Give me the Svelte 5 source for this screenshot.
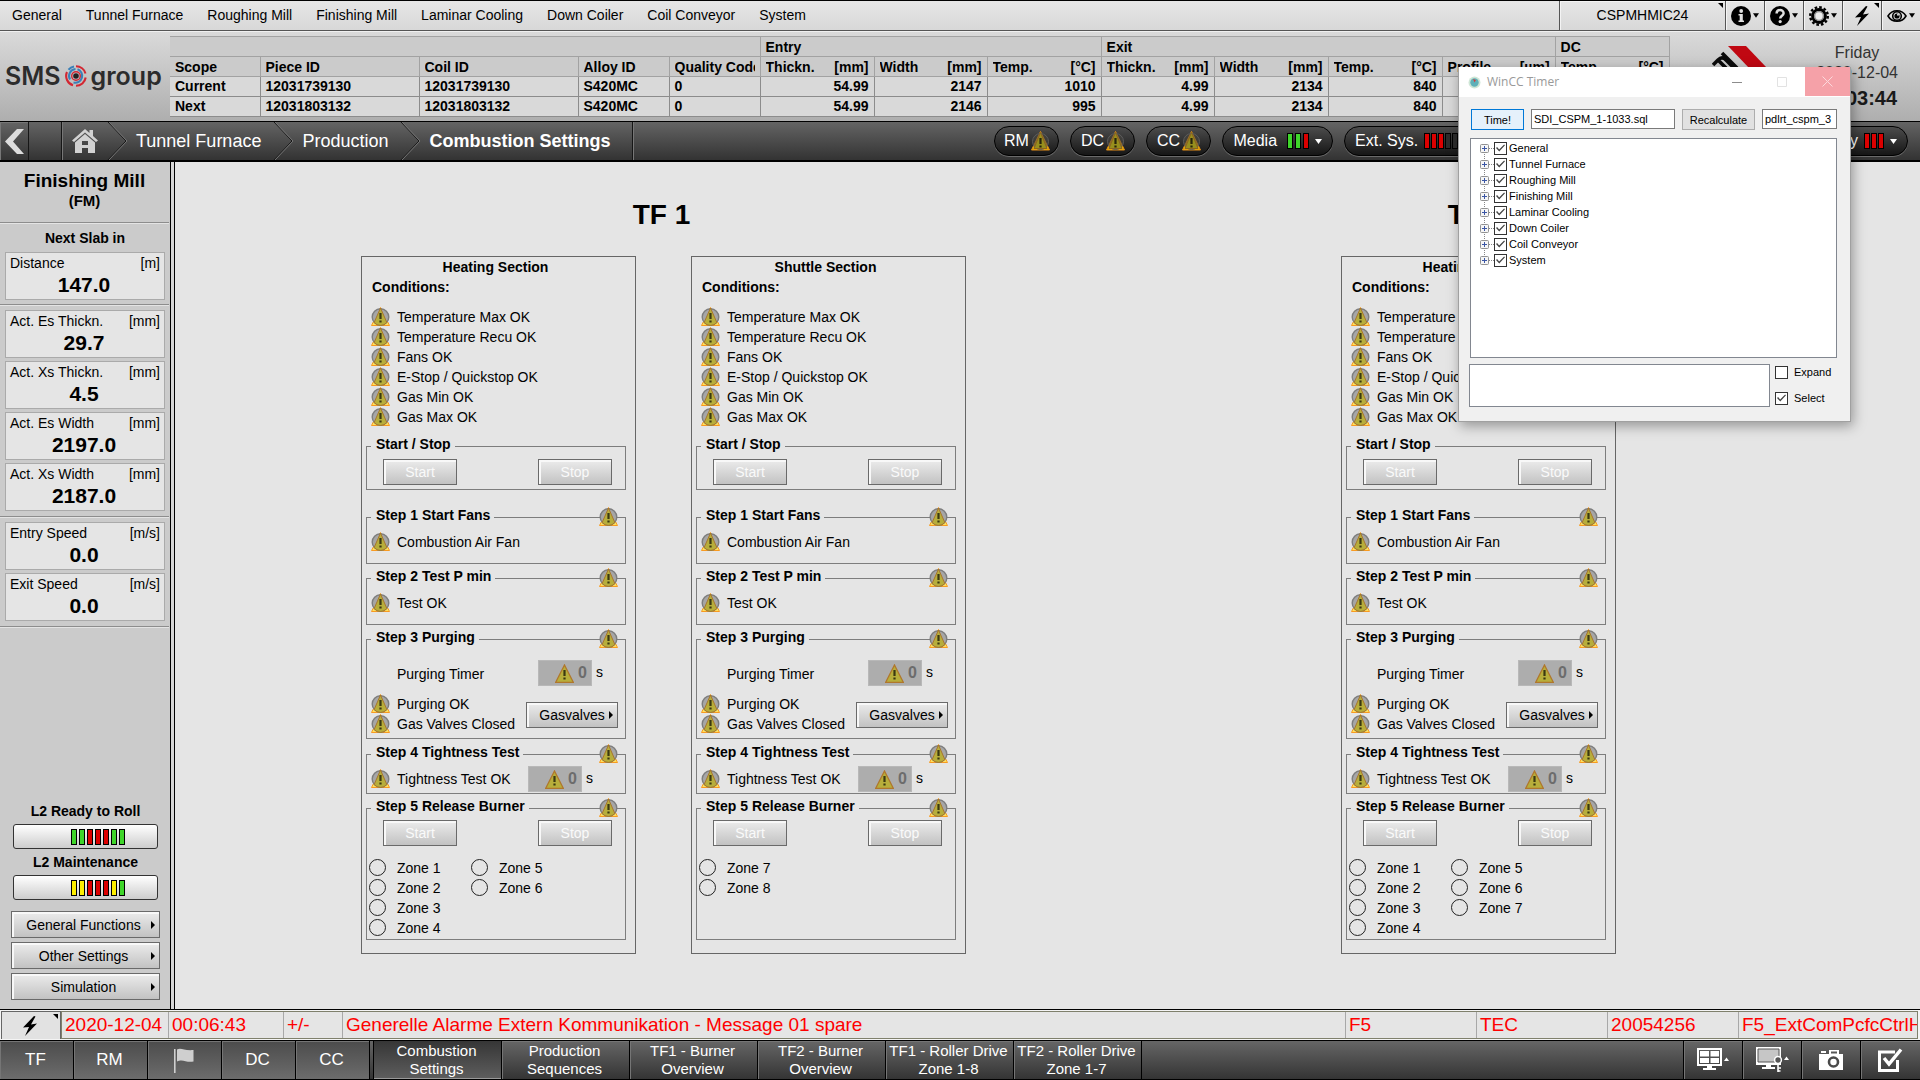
<script>
  const menu = ['General', 'Tunnel Furnace', 'Roughing Mill', 'Finishing Mill', 'Laminar Cooling', 'Down Coiler', 'Coil Conveyor', 'System'];

  const columns = [
    { label: 'Scope', width: 90 },
    { label: 'Piece ID', width: 159 },
    { label: 'Coil ID', width: 159 },
    { label: 'Alloy ID', width: 91 },
    { label: 'Quality Code', width: 91 },
    { label: 'Thickn.', unit: '[mm]', width: 114 },
    { label: 'Width', unit: '[mm]', width: 113 },
    { label: 'Temp.', unit: '[°C]', width: 114 },
    { label: 'Thickn.', unit: '[mm]', width: 113 },
    { label: 'Width', unit: '[mm]', width: 114 },
    { label: 'Temp.', unit: '[°C]', width: 114 },
    { label: 'Profile', unit: '[µm]', width: 113 },
    { label: 'Temp.', unit: '[°C]', width: 114 }
  ];
  const pieces = [
    ['Current', '12031739130', '12031739130', 'S420MC', '0', '54.99', '2147', '1010', '4.99', '2134', '840', '', ''],
    ['Next', '12031803132', '12031803132', 'S420MC', '0', '54.99', '2146', '995', '4.99', '2134', '840', '', '']
  ];

  const readings = [
    [{ label: 'Distance', unit: '[m]', value: '147.0' }],
    [
      { label: 'Act. Es Thickn.', unit: '[mm]', value: '29.7' },
      { label: 'Act. Xs Thickn.', unit: '[mm]', value: '4.5' },
      { label: 'Act. Es Width', unit: '[mm]', value: '2197.0' },
      { label: 'Act. Xs Width', unit: '[mm]', value: '2187.0' }
    ],
    [
      { label: 'Entry Speed', unit: '[m/s]', value: '0.0' },
      { label: 'Exit Speed', unit: '[m/s]', value: '0.0' }
    ]
  ];

  const level2 = [
    { label: 'L2 Ready to Roll', bars: ['green', 'green', 'red', 'red', 'red', 'green', 'green'] },
    { label: 'L2 Maintenance', bars: ['yellow', 'yellow', 'red', 'red', 'red', 'yellow', 'green'] }
  ];

  const conditions = ['Temperature Max OK', 'Temperature Recu OK', 'Fans OK', 'E-Stop / Quickstop OK', 'Gas Min OK', 'Gas Max OK'];

  const furnaces = [
    {
      name: 'TF 1',
      sections: [
        { name: 'Heating Section', zones: [[1, 2, 3, 4], [5, 6]] },
        { name: 'Shuttle Section', zones: [[7, 8]] }
      ]
    },
    { name: 'TF 2', sections: [{ name: 'Heating Section', zones: [[1, 2, 3, 4], [5, 6, 7]] }] }
  ];

  const pages = [
    ['Combustion', 'Settings'],
    ['Production', 'Sequences'],
    ['TF1 - Burner', 'Overview'],
    ['TF2 - Burner', 'Overview'],
    ['TF1 - Roller Drive', 'Zone 1-8'],
    ['TF2 - Roller Drive', 'Zone 1-7']
  ];

  let checked = $state(menu.map(() => true));
  let script = $state('SDI_CSPM_1-1033.sql');
  let target = $state('pdlrt_cspm_3');
  let log = $state('');
  let expand = $state(false);
  let select = $state(true);
</script>

{#snippet status()}
  <svg class="status" width="19" height="19" viewBox="0 0 19 19" aria-hidden="true">
    <path d="M9.5 0.5 L18.5 18.5 H0.5 Z" fill="#ffe25a" stroke="#f79a22" />
    <circle cx="9.5" cy="10" r="8.3" fill="#a6a6a6" stroke="#7d7d7d" stroke-width="1.4" />
    <path d="M9.5 1 L15.8 15.4 A8 8 0 0 1 3.2 15.4 Z" fill="#b7ae3b" stroke="#a9762c" />
    <path d="M9.5 6 V12 M9.5 13.5 V15.5" stroke="#3a3812" stroke-width="2.2" />
  </svg>
{/snippet}

{#snippet triangle()}
  <svg width="19" height="19" viewBox="0 0 19 19" aria-hidden="true">
    <path d="M9.5 1 L18.3 18.3 H0.7 Z" fill="#b7ae3b" stroke="#b0772c" stroke-width="1.3" />
    <path d="M9.5 6 V12 M9.5 13.5 V15.5" stroke="#3a3812" stroke-width="2.2" />
  </svg>
{/snippet}

{#snippet darkStatus()}
  <svg width="19" height="20" viewBox="0 0 19 20" aria-hidden="true">
    <path d="M9.5 0.5 L18.5 19 H0.5 Z" fill="#e5b800" stroke="#e08a18" />
    <circle cx="9.5" cy="10.5" r="8" fill="#474540" fill-opacity="0.5" stroke="#5d5d5d" />
    <path d="M9.5 1.5 L16 17.5 H3 Z" fill="#978f1d" stroke="#8a6420" />
    <path d="M9.5 7 V13 M9.5 14.5 V16.5" stroke="#26240c" stroke-width="2.2" />
  </svg>
{/snippet}

{#snippet bars(list)}
  <span class="bars">
    {#each list as color}<i class="bar {color}"></i>{/each}
  </span>
{/snippet}

{#snippet down()}
  <svg class="down" width="7" height="5" viewBox="0 0 7 5" aria-hidden="true"><path d="M0 0 H7 L3.5 5 Z" fill="currentColor" /></svg>
{/snippet}

{#snippet right()}
  <svg class="right" width="4" height="8" viewBox="0 0 4 8" aria-hidden="true"><path d="M0 0 L4 4 L0 8 Z" fill="currentColor" /></svg>
{/snippet}

{#snippet corner()}
  <svg class="corner" width="5" height="5" viewBox="0 0 5 5" aria-hidden="true"><path d="M0 0 H5 V5 Z" fill="#000" /></svg>
{/snippet}

{#snippet bolt()}
  <svg width="16" height="20" viewBox="0 0 16 20" aria-hidden="true"><path d="M12 0 L1 11.5 L7 11 L3 20 L15 7.5 L9 8.5 L13.5 0.5 Z" fill="#000" /></svg>
{/snippet}

{#snippet chevron()}
  <svg class="chevron" width="20" height="38" viewBox="0 0 20 38" aria-hidden="true">
    <path d="M1 0 L19 19 L1 38" fill="none" stroke="#161616" />
    <path d="M2 0 L20 19 L2 38" fill="none" stroke="#767676" />
  </svg>
{/snippet}

<div class="page">
  <nav class="menu" aria-label="Areas">
    {#each menu as item}<button class="menu-item">{item}</button>{/each}
    <div class="tools">
      <button class="tool host">CSPMHMIC24{@render corner()}</button>
      <button class="tool" aria-label="Information">
        <svg width="20" height="20" viewBox="0 0 20 20" aria-hidden="true"><circle cx="10" cy="10" r="10" fill="#000" /><circle cx="10.2" cy="5" r="1.9" fill="#e0e0e0" /><path d="M7.5 8 H11.8 V14.5 H13 V16 H7.5 V14.5 H8.7 V9.5 H7.5 Z" fill="#e0e0e0" /></svg>
        {@render down()}
      </button>
      <button class="tool" aria-label="Help">
        <svg width="20" height="20" viewBox="0 0 20 20" aria-hidden="true"><circle cx="10" cy="10" r="10" fill="#000" /><path d="M6.6 7.6 C6.6 3 13.6 3 13.6 7.3 C13.6 9.8 10.2 9.8 10.2 12.6" fill="none" stroke="#e0e0e0" stroke-width="2.5" /><circle cx="10.2" cy="15.6" r="1.6" fill="#e0e0e0" /></svg>
        {@render down()}
      </button>
      <button class="tool" aria-label="Settings">
        <svg width="20" height="20" viewBox="0 0 20 20" aria-hidden="true"><circle cx="10" cy="10" r="8.8" fill="none" stroke="#000" stroke-width="2.4" stroke-dasharray="2.6 2" /><circle cx="10" cy="10" r="6.4" fill="#ededed" stroke="#000" stroke-width="3" /><circle cx="10" cy="10" r="4.4" fill="#ededed" stroke="#8d8d8d" stroke-width="1.4" /></svg>
        {@render down()}
      </button>
      <button class="tool" aria-label="Actions">{@render bolt()}{@render corner()}</button>
      <button class="tool" aria-label="View">
        <svg width="20" height="14" viewBox="0 0 20 14" aria-hidden="true"><path d="M1 7 C5 0 15 0 19 7 C15 14 5 14 1 7 Z" fill="none" stroke="#000" stroke-width="1.6" /><circle cx="10" cy="7" r="4.3" fill="none" stroke="#000" stroke-width="1.6" /><circle cx="10" cy="7" r="2.6" fill="#000" /><circle cx="11" cy="5.8" r="1" fill="#e0e0e0" /></svg>
        {@render down()}
      </button>
    </div>
  </nav>

  <header class="header">
    <div class="logo">
      <span>SMS</span>
      <svg width="22" height="22" viewBox="0 0 22 22" aria-hidden="true">
        <g fill="none" stroke-width="2.1">
          <path d="M11 1.2 A9.8 9.8 0 0 1 20.5 8.5 M20.7 12.5 A9.8 9.8 0 0 1 11 20.8 M8 20.3 A9.8 9.8 0 0 1 2 7" stroke="#d32732" />
          <path d="M3.5 4.7 A9.8 9.8 0 0 1 9 1.5" stroke="#3b80b8" />
          <path d="M5 14.5 A7 7 0 0 1 10.5 4" stroke="#3b80b8" />
          <path d="M12.5 4.2 A7 7 0 0 1 8.5 17.6" stroke="#3b80b8" />
          <circle cx="11" cy="11" r="4.3" stroke="#d32732" stroke-width="1.4" />
        </g>
        <circle cx="11" cy="11" r="2.8" fill="#222" />
      </svg>
      <span>group</span>
    </div>

    <table class="pieces">
      <colgroup>
        {#each columns as column}<col style:width="{column.width}px" />{/each}
      </colgroup>
      <thead>
        <tr>
          <th colspan="5"></th>
          <th colspan="3" scope="colgroup">Entry</th>
          <th colspan="4" scope="colgroup">Exit</th>
          <th scope="colgroup">DC</th>
        </tr>
        <tr>
          {#each columns as column}
            <th scope="col"><div class="pair"><span>{column.label}</span>{#if column.unit}<span>{column.unit}</span>{/if}</div></th>
          {/each}
        </tr>
      </thead>
      <tbody>
        {#each pieces as row}
          <tr>
            {#each row as cell, i}<td class:number={i > 4}>{cell}</td>{/each}
          </tr>
        {/each}
      </tbody>
    </table>

    <div class="brand">
      <svg width="60" height="50" viewBox="0 0 60 50" aria-hidden="true">
        <path d="M16 0 H34 L80 48 H62 Z" fill="#c00812" />
        <path d="M10 7 L25 22 M1 19 L6 14 Q10 10 14 14 L22 22 M6 14 L14 22" fill="none" stroke="#0b0b0b" stroke-width="3.6" />
      </svg>
    </div>
    <div class="clock">
      <span>Friday</span>
      <span>2020-12-04</span>
      <strong>00:03:44</strong>
    </div>
  </header>

  <nav class="crumbs" aria-label="Breadcrumb">
    <button class="back" aria-label="Back">
      <svg width="19" height="25" viewBox="0 0 19 25" aria-hidden="true"><path d="M12 0 H19 L8 12.5 L19 25 H12 L0 12.5 Z" fill="#ddd" /></svg>
    </button>
    <span class="blank"></span>
    <button class="home" aria-label="Home">
      <svg width="26" height="24" viewBox="0 0 26 24" aria-hidden="true"><path d="M13 0 L0 11.5 L2 13 L13 3.5 L24 13 L26 11.5 L21 7 V1 H17.5 V4 Z" fill="#d2d2d2" /><path d="M13 5 L3 13.5 V24 H10 V19 H16 V24 H23 V13.5 Z M10 12 H16 V16 H10 Z" fill="#d2d2d2" fill-rule="evenodd" /></svg>
    </button>
    {@render chevron()}
    <a href="#furnace">Tunnel Furnace</a>
    {@render chevron()}
    <a href="#production">Production</a>
    {@render chevron()}
    <a class="current" href="#combustion" aria-current="page">Combustion Settings</a>
    <div class="pills">
      <button class="pill">RM{@render darkStatus()}</button>
      <button class="pill">DC{@render darkStatus()}</button>
      <button class="pill">CC{@render darkStatus()}</button>
      <button class="pill wide">Media {@render bars(['green', 'green', 'red'])}{@render down()}</button>
      <button class="pill wide dense">Ext. Sys. {@render bars(['red', 'red', 'red', 'off', 'off', 'off', 'off', 'off', 'off', 'off'])}{@render down()}</button>
      <button class="pill wide dense last">Safety {@render bars(['red', 'red', 'red'])}{@render down()}</button>
    </div>
  </nav>

  <div class="body">
    <aside class="side">
      <div class="area">
        <h2>Finishing Mill</h2>
        <p>(FM)</p>
      </div>
      {#each readings as group, i}
        <div class="group">
          {#if i === 0}<h3>Next Slab in</h3>{/if}
          {#each group as item}
            <div class="reading">
              <div class="pair"><span>{item.label}</span><span>{item.unit}</span></div>
              <output>{item.value}</output>
            </div>
          {/each}
        </div>
      {/each}
      <div class="level2">
        {#each level2 as item}
          <h3>{item.label}</h3>
          <button class="signal" aria-label={item.label}>{@render bars(item.bars)}</button>
        {/each}
      </div>
      <div class="functions">
        {#each ['General Functions', 'Other Settings', 'Simulation'] as item}
          <button class="raised"><span>{item}</span>{@render right()}</button>
        {/each}
      </div>
    </aside>

    <main class="main">
      {#each furnaces as furnace}
        <section class="furnace">
          <h1>{furnace.name}</h1>
          <div class="sections">
            {#each furnace.sections as section}
              <article class="panel">
                <h2>{section.name}</h2>
                <h3>Conditions:</h3>
                <ul class="conditions">
                  {#each conditions as condition}<li class="row">{@render status()}{condition}</li>{/each}
                </ul>

                <div class="step first">
                  <fieldset class="commands">
                    <legend>Start / Stop</legend>
                    <div class="actions"><button class="raised" disabled>Start</button><button class="raised" disabled>Stop</button></div>
                  </fieldset>
                </div>

                <div class="step second">
                  <fieldset class="single">
                    <legend>Step 1 Start Fans</legend>
                    <div class="row">{@render status()}Combustion Air Fan</div>
                  </fieldset>
                  <span class="badge">{@render status()}</span>
                </div>

                <div class="step">
                  <fieldset class="single">
                    <legend>Step 2 Test P min</legend>
                    <div class="row">{@render status()}Test OK</div>
                  </fieldset>
                  <span class="badge">{@render status()}</span>
                </div>

                <div class="step">
                  <fieldset class="purging">
                    <legend>Step 3 Purging</legend>
                    <div class="timer">
                      <span class="timer-label">Purging Timer</span>
                      <output class="field">{@render triangle()}0</output>
                      <span class="seconds">s</span>
                    </div>
                    <div class="valves">
                      <div>
                        <div class="row">{@render status()}Purging OK</div>
                        <div class="row">{@render status()}Gas Valves Closed</div>
                      </div>
                      <button class="raised"><span>Gasvalves</span>{@render right()}</button>
                    </div>
                  </fieldset>
                  <span class="badge">{@render status()}</span>
                </div>

                <div class="step fourth">
                  <fieldset class="tightness">
                    <legend>Step 4 Tightness Test</legend>
                    <div class="timer">
                      <div class="row timer-label">{@render status()}Tightness Test OK</div>
                      <output class="field">{@render triangle()}0</output>
                      <span class="seconds">s</span>
                    </div>
                  </fieldset>
                  <span class="badge">{@render status()}</span>
                </div>

                <div class="step">
                  <fieldset class="commands burner">
                    <legend>Step 5 Release Burner</legend>
                    <div class="actions"><button class="raised" disabled>Start</button><button class="raised" disabled>Stop</button></div>
                    <div class="zones">
                      {#each section.zones as zoneColumn}
                        <ul>
                          {#each zoneColumn as zone}<li><i class="lamp"></i>Zone {zone}</li>{/each}
                        </ul>
                      {/each}
                    </div>
                  </fieldset>
                  <span class="badge">{@render status()}</span>
                </div>
              </article>
            {/each}
          </div>
        </section>
      {/each}
    </main>
  </div>

  <div class="alarm">
    <button class="alarm-button" aria-label="Alarms">{@render bolt()}{@render corner()}</button>
    <div class="alarm-line">
      <span class="date">2020-12-04</span>
      <span class="time">00:06:43</span>
      <span class="state">+/-</span>
      <span class="message">Generelle Alarme Extern Kommunikation - Message 01 spare</span>
      <span class="code">F5</span>
      <span class="code">TEC</span>
      <span class="code">20054256</span>
      <span class="source">F5_ExtComPcfcCtrlHmi</span>
    </div>
  </div>

  <footer class="footer">
    <button class="unit">TF</button>
    <button class="unit">RM</button>
    <button class="unit" aria-label="Flag">
      <svg width="20" height="25" viewBox="0 0 20 25" aria-hidden="true"><path d="M0.8 1 V25" stroke="#cfcfcf" stroke-width="1.6" /><path d="M3 1.5 C7 -1 10 3 19.5 2 V13.5 C12 15 9 10.5 3 13.5 Z" fill="#cfcfcf" /></svg>
    </button>
    <button class="unit">DC</button>
    <button class="unit">CC</button>
    <div class="pages">
      {#each pages as page, i}
        <button class="tab" class:active={i === 0}>{page[0]}<br />{page[1]}</button>
      {/each}
    </div>
    <div class="system">
      <button class="icon" aria-label="Layouts">
        <svg width="33" height="24" viewBox="0 0 33 24" aria-hidden="true"><path d="M0 0 H25 V18 H0 Z M2 2 V16 H23 V2 Z" fill="#fff" fill-rule="evenodd" /><path d="M3 3 H12 V8.5 H3 Z M13.5 3 H22 V8.5 H13.5 Z M3 10 H12 V15 H3 Z M13.5 10 H22 V15 H13.5 Z" fill="#fff" /><path d="M10 18 H15 V20 H19 V22 H6 V20 H10 Z" fill="#fff" /><path d="M27 13 L29.5 9.5 L32 13 Z" fill="#fff" /></svg>
      </button>
      <button class="icon" aria-label="Screen access">
        <svg width="33" height="26" viewBox="0 0 33 26" aria-hidden="true"><path d="M0 0 H25 V18 H0 Z" fill="#fff" /><path d="M2 2 H23 V15 H2 Z" fill="#c6c6c6" stroke="#555" /><path d="M10 18 H15 V20 H19 V22 H6 V20 H10 Z" fill="#fff" /><circle cx="22" cy="13" r="3.4" fill="#555" stroke="#fff" stroke-width="1.5" /><path d="M22 16.5 V25 M22 21 H25 M22 24 H24.5" stroke="#fff" stroke-width="1.6" /><path d="M28 13 L30.5 9.5 L33 13 Z" fill="#fff" /></svg>
      </button>
      <button class="icon" aria-label="Screenshot">
        <svg width="24" height="20" viewBox="0 0 24 20" aria-hidden="true"><path d="M0 4 H10 V0 H20 V4 H24 V20 H0 Z M12 1.5 V3.5 H18 V1.5 Z" fill="#fff" fill-rule="evenodd" /><circle cx="14.5" cy="12" r="4.5" fill="#fff" stroke="#4a4a4a" stroke-width="2.6" /><path d="M2 2 H7" stroke="#fff" stroke-width="2" /></svg>
      </button>
      <button class="icon" aria-label="Acknowledge">
        <svg width="25" height="24" viewBox="0 0 25 24" aria-hidden="true"><path d="M17 4 H1.5 V22.5 H19.5 V12" fill="none" stroke="#fff" stroke-width="3" /><path d="M6 10 L11 16 L23 1.5" fill="none" stroke="#fff" stroke-width="3.4" /></svg>
      </button>
    </div>
  </footer>

  <div class="dialog" role="dialog" aria-label="WinCC Timer">
    <div class="titlebar">
      <svg width="13" height="13" viewBox="0 0 13 13" aria-hidden="true"><circle cx="6.5" cy="6.5" r="6" fill="#cfe6d6" /><circle cx="6.5" cy="6.5" r="4.2" fill="#5fb0b8" /><path d="M6.5 6.5 L5 3 L8 4 Z" fill="#d04040" /></svg>
      <span class="title">WinCC Timer</span>
      <button class="win" aria-label="Minimize"><svg width="11" height="11" viewBox="0 0 11 11" aria-hidden="true"><path d="M0 5.5 H10" stroke="#8c8c8c" /></svg></button>
      <button class="win" aria-label="Maximize" disabled><svg width="11" height="11" viewBox="0 0 11 11" aria-hidden="true"><path d="M0.5 0.5 H9.5 V9.5 H0.5 Z" fill="none" stroke="#e2e2e2" /></svg></button>
      <button class="win close" aria-label="Close"><svg width="11" height="11" viewBox="0 0 11 11" aria-hidden="true"><path d="M0.5 0.5 L10.5 10.5 M10.5 0.5 L0.5 10.5" stroke="#fbd9dc" /></svg></button>
    </div>
    <div class="content">
      <div class="inputs">
        <button class="plain primary">Time!</button>
        <input class="script" aria-label="Script file" bind:value={script} />
        <button class="plain">Recalculate</button>
        <input class="target" aria-label="Target" bind:value={target} />
      </div>
      <ul class="tree">
        {#each menu as item, i}
          <li>
            <svg width="14" height="16" viewBox="0 0 14 16" aria-hidden="true">
              <path d="M4.5 {i === 0 ? 12 : 0} V{i === menu.length - 1 ? 8 : 16} M9 8.5 H14" stroke="#888" stroke-dasharray="1 1" />
              <rect x="0.5" y="4.5" width="8" height="8" rx="1" fill="#f6f6f6" stroke="#929292" />
              <path d="M2 8.5 H7 M4.5 6 V11" stroke="#3b56a5" />
            </svg>
            <label><input type="checkbox" bind:checked={checked[i]} />{item}</label>
          </li>
        {/each}
      </ul>
      <div class="bottom">
        <textarea aria-label="Log" bind:value={log}></textarea>
        <div class="options">
          <label><input type="checkbox" bind:checked={expand} />Expand</label>
          <label><input type="checkbox" bind:checked={select} />Select</label>
        </div>
      </div>
    </div>
  </div>
</div>

<style>
  :global(body) {
    margin: 0;
    background: #e5e5e5;
  }
  .page,
  .page * {
    box-sizing: border-box;
  }
  .page {
    position: relative;
    display: flex;
    flex-direction: column;
    min-height: 100vh;
    overflow: hidden;
    color: #000;
    font: 14px/20px 'Liberation Sans', Arial, sans-serif;
  }
  button,
  input,
  textarea {
    margin: 0;
    padding: 0;
    border: 0;
    background: none;
    color: inherit;
    font: inherit;
  }
  h1,
  h2,
  h3,
  p,
  ul {
    margin: 0;
    padding: 0;
    list-style: none;
  }
  svg {
    display: block;
    flex: none;
  }
  .pair {
    display: flex;
    justify-content: space-between;
  }

  /* Top menu */
  .menu {
    display: flex;
    height: 31px;
    border-top: 1px solid #000;
    border-bottom: 1px solid #555;
    background: linear-gradient(#e6e6e6, #d8d8d8);
  }
  .menu-item {
    padding: 0 12px 2px;
    white-space: nowrap;
  }
  .tools {
    display: flex;
    margin-left: auto;
  }
  .tool {
    position: relative;
    display: flex;
    align-items: center;
    justify-content: center;
    gap: 2px;
    width: 39px;
    border-left: 1px solid #555;
    box-shadow: inset 1px 1px #f4f4f4;
  }
  .tool .down {
    width: 6px;
  }
  .host {
    width: 166px;
    padding-bottom: 2px;
  }
  .corner {
    position: absolute;
    top: 2px;
    right: 2px;
  }

  /* Header */
  .header {
    display: flex;
    padding: 4px 0;
    border-top: 1px solid #f0f0f0;
    background: linear-gradient(#dadada, #aeaeae);
  }
  .logo {
    display: flex;
    align-items: center;
    gap: 4px;
    flex: none;
    width: 170px;
    padding: 0 0 2px 5px;
    color: #2c2c2c;
    font: 600 25px/24px Inter, 'Liberation Sans', sans-serif;
  }
  .pieces {
    flex: none;
    width: 1499px;
    table-layout: fixed;
    border-collapse: collapse;
    background: #d9d9d9;
    font-weight: bold;
  }
  .pieces th,
  .pieces td {
    height: 20px;
    padding: 0 5px 1px;
    border: 1px solid #8c8c8c;
    overflow: hidden;
    line-height: 18px;
    text-align: left;
    white-space: nowrap;
  }
  .pieces th {
    padding: 2px 5px 0;
    border-color: #a2a2a2;
    background: #cbcbcb;
    line-height: 17px;
  }
  .pieces th:first-child,
  .pieces td:first-child {
    border-left: 0;
  }
  .pieces .pair {
    overflow: hidden;
  }
  .pieces .number {
    text-align: right;
  }
  .brand {
    padding: 10px 0 0 42px;
  }
  .brand svg {
    overflow: hidden;
  }
  .clock {
    display: flex;
    flex-direction: column;
    align-items: center;
    margin-left: auto;
    padding: 7px 22px 0 0;
    color: #333;
    font-size: 16px;
  }
  .clock strong {
    margin-top: 2px;
    color: #1a1a1a;
    font-size: 20px;
    line-height: 26px;
  }

  /* Breadcrumb bar */
  .crumbs {
    display: flex;
    align-items: stretch;
    height: 41px;
    border-top: 1px solid #000;
    border-bottom: 2px solid #000;
    background: linear-gradient(#646464, #333);
    color: #fff;
  }
  .back {
    display: flex;
    align-items: center;
    justify-content: center;
    width: 29px;
    border-right: 1px solid #161616;
    box-shadow: inset 1px 1px #777;
  }
  .blank {
    width: 33px;
    border-right: 1px solid #161616;
  }
  .home {
    display: flex;
    align-items: center;
    width: 45px;
    padding-left: 9px;
    border-left: 1px solid #777;
  }
  .crumbs a {
    padding: 0 12px 0 10px;
    color: #fff;
    font-size: 18px;
    line-height: 38px;
    text-decoration: none;
    white-space: nowrap;
  }
  .crumbs .current {
    padding-right: 22px;
    border-right: 1px solid #161616;
    box-shadow: 1px 0 #777;
    font-weight: bold;
  }
  .chevron {
    margin-right: -1px;
  }
  .pills {
    display: flex;
    flex: 1;
    gap: 11px;
    margin-left: 361px;
    padding: 4px 12px 0 0;
  }
  .pill {
    display: flex;
    align-items: center;
    justify-content: center;
    gap: 2px;
    width: 65px;
    height: 30px;
    border: 1px solid #000;
    border-radius: 15px;
    background: linear-gradient(#4c4c4c, #161616);
    box-shadow: 0 1px #6a6a6a;
    font-size: 16px;
    white-space: nowrap;
  }
  .wide {
    gap: 10px;
    width: auto;
    padding: 0 10px;
  }
  .wide .down {
    margin-left: -4px;
  }
  .dense {
    gap: 6px;
  }
  .dense .bars {
    gap: 1px;
  }
  .dense .down {
    margin-left: 0;
  }
  .last {
    margin-left: auto;
  }
  .bars {
    display: flex;
    gap: 2px;
  }
  .bar {
    width: 6px;
    height: 16px;
    border: 1px solid #000;
  }
  .green {
    background: #3fd52a;
  }
  .red {
    background: #dc0000;
  }
  .yellow {
    background: #fdee00;
  }
  .off {
    background: #2c2c2c;
  }

  /* Side bar */
  .body {
    display: flex;
    flex: 1;
  }
  .side {
    display: flex;
    flex-direction: column;
    flex: none;
    width: 175px;
    padding-right: 5px;
    border-right: 1px solid #000;
    background: linear-gradient(90deg, #cbcbcb 170px, #000 170px 171px, #d6d6d6 171px);
  }
  .side h3,
  .panel h2,
  .panel h3 {
    font-size: 14px;
    line-height: 20px;
  }
  .area,
  .group {
    margin-bottom: 1px;
    border-bottom: 1px solid #8d8d8d;
    box-shadow: 0 1px #e4e4e4;
  }
  .area {
    padding: 7px 0 13px;
    text-align: center;
    font-weight: bold;
  }
  .area h2 {
    font-size: 19px;
    line-height: 24px;
  }
  .area p {
    font-size: 15px;
    line-height: 16px;
  }
  .group {
    display: flex;
    flex-direction: column;
    gap: 3px;
    padding: 4px 4px 4px 5px;
  }
  .group + .group {
    padding-bottom: 5px;
  }
  .side h3 {
    padding-bottom: 1px;
    text-align: center;
  }
  .reading {
    padding: 1px 4px 2px;
    border: 1px solid #aaa;
    background: #e5e5e5;
    line-height: 18px;
  }
  .reading output {
    display: block;
    padding: 1px 2px 0 0;
    font-size: 21px;
    font-weight: bold;
    line-height: 24px;
    text-align: center;
  }
  .level2 {
    display: flex;
    flex-direction: column;
    gap: 3px;
    margin: auto 11px 11px 13px;
  }
  .level2 h3 {
    padding: 0;
  }
  .signal {
    display: flex;
    align-items: center;
    justify-content: center;
    height: 25px;
    padding-left: 24px;
    border: 1px solid #333;
    border-radius: 3px;
    background: linear-gradient(#fff, #cdcdcd);
  }
  .functions {
    display: flex;
    flex-direction: column;
    gap: 4px;
    padding: 0 9px 9px 11px;
  }
  .raised {
    display: flex;
    align-items: center;
    justify-content: center;
    height: 26px;
    border: 1px solid #6a6a6a;
    background: linear-gradient(#ececec, #c2c2c2);
    box-shadow: inset 2px 2px #f8f8f8;
  }
  .raised span {
    flex: 1;
    text-align: center;
  }
  .functions .raised {
    height: 27px;
    padding: 0 4px;
  }
  .raised:disabled {
    color: #fafafa;
  }

  /* Furnace panels */
  .main {
    display: flex;
    flex: 1;
    gap: 375px;
    padding: 33px 0 0 186px;
    background: #e5e5e5;
  }
  h1 {
    padding: 0 4px 21px 0;
    font-size: 28px;
    line-height: 40px;
    text-align: center;
  }
  .sections {
    display: flex;
    gap: 55px;
  }
  .panel {
    width: 275px;
    padding: 0 9px 13px 4px;
    border: 1px solid #666;
  }
  .panel h2 {
    padding-right: 1px;
    text-align: center;
  }
  .panel h3 {
    padding-left: 6px;
  }
  .row {
    display: flex;
    gap: 7px;
    height: 20px;
    white-space: nowrap;
  }
  .conditions {
    padding: 10px 0 0 5px;
  }
  .step {
    position: relative;
    margin-top: 4px;
  }
  .first {
    margin-top: 9px;
  }
  .second {
    margin-top: 17px;
  }
  .fourth {
    margin-top: 5px;
  }
  .badge {
    position: absolute;
    top: 0;
    right: 8px;
  }
  fieldset {
    min-width: 0;
    margin: 0;
    padding: 0 4px;
    border: 1px solid #7d7d7d;
  }
  legend {
    padding: 0 4px 4px 5px;
    font-weight: bold;
    line-height: 16px;
  }
  .commands {
    padding: 3px 13px 4px 4px;
  }
  .commands .actions {
    display: flex;
    justify-content: space-between;
    padding-left: 12px;
  }
  .actions .raised {
    width: 74px;
  }
  .single {
    padding: 5px 4px 11px;
  }
  .purging {
    padding: 11px 7px 4px 4px;
  }
  .timer {
    display: flex;
    gap: 4px;
    height: 26px;
  }
  .purging .timer-label {
    width: 163px;
    padding: 4px 0 0 26px;
  }
  .tightness {
    padding: 2px 4px 1px;
  }
  .tightness .timer-label {
    width: 153px;
    padding-top: 3px;
  }
  .field {
    display: flex;
    align-items: center;
    justify-content: flex-end;
    gap: 4px;
    width: 54px;
    height: 26px;
    padding-right: 4px;
    border: 1px solid #b8b8b8;
    background: #adadad;
    color: #6c6c6c;
    font-size: 16px;
    font-weight: bold;
  }
  .seconds {
    padding-top: 2px;
  }
  .valves {
    display: flex;
    justify-content: space-between;
    padding-top: 8px;
  }
  .valves .raised {
    width: 92px;
    margin-top: 8px;
    padding: 0 4px 0 8px;
  }
  .burner {
    padding-top: 2px;
    padding-bottom: 1px;
  }
  .zones {
    display: flex;
    min-height: 92px;
    padding-top: 12px;
  }
  .zones ul {
    width: 102px;
    margin-left: -2px;
    margin-right: 2px;
  }
  .zones li {
    display: flex;
    gap: 11px;
  }
  .lamp {
    width: 17px;
    height: 17px;
    margin-top: 1px;
    border: 1px solid #222;
    border-radius: 50%;
  }

  /* Alarm line */
  .alarm {
    display: flex;
    height: 31px;
    padding: 1px 2px 1px 1px;
    border-top: 1px solid #000;
    background: #f4f4f4;
  }
  .alarm-button {
    position: relative;
    display: flex;
    align-items: center;
    justify-content: center;
    flex: none;
    width: 60px;
    padding-right: 2px;
    border: 1px solid #666;
    border-bottom: 0;
    background: #e2e2e2;
  }
  .alarm-line {
    display: flex;
    flex: 1;
    min-width: 0;
    border: 1px solid #7f806c;
    background: #e5e5e5;
    color: #f00;
    font-size: 19px;
    line-height: 26px;
  }
  .alarm-line span {
    flex: none;
    padding-left: 3px;
    border-right: 1px solid #a8a8a8;
    overflow: hidden;
    white-space: nowrap;
  }
  .alarm-line .date {
    width: 107px;
  }
  .alarm-line .time {
    width: 115px;
  }
  .alarm-line .state {
    width: 59px;
  }
  .alarm-line .message {
    flex: 1;
    min-width: 0;
  }
  .alarm-line .code {
    width: 131px;
  }
  .alarm-line .source {
    width: 178px;
    border-right: 0;
  }

  /* Footer */
  .footer {
    display: flex;
    height: 40px;
    border-top: 1px solid #000;
    border-bottom: 1px solid #000;
    background: linear-gradient(#666, #343434);
    color: #fff;
  }
  .footer button {
    display: flex;
    align-items: center;
    justify-content: center;
    border-right: 1px solid #000;
    box-shadow: inset 1px 1px #757575;
  }
  .footer .unit {
    width: 74px;
    padding-right: 2px;
    background: linear-gradient(#4c4c4c, #6c6c6c);
    font-size: 17px;
  }
  .pages {
    display: flex;
    margin-left: 3px;
    border-left: 1px solid #000;
  }
  .footer .tab {
    width: 128px;
    padding-right: 2px;
    font-size: 15px;
    line-height: 18px;
    white-space: nowrap;
  }
  .footer .active {
    background: linear-gradient(#363636, #5e5e5e);
    box-shadow: inset 0 -1px #999;
  }
  .system {
    display: flex;
    margin-left: auto;
    border-left: 1px solid #000;
  }
  .footer .icon {
    width: 59px;
  }
  .footer .icon:last-child {
    border-right: 0;
  }

  /* Floating timer window */
  .dialog {
    position: absolute;
    top: 67px;
    right: 69px;
    width: 393px;
    border: 1px solid #a0a0a0;
    border-top: 0;
    background: #f0f0f0;
    box-shadow: 2px 4px 12px rgba(0, 0, 0, 0.35);
    font-size: 11px;
    line-height: 16px;
  }
  .titlebar {
    display: flex;
    align-items: center;
    height: 30px;
    padding-left: 9px;
    background: #fff;
  }
  .title {
    flex: 1;
    padding-left: 6px;
    color: #999;
    font-family: 'Open Sans', sans-serif;
    font-size: 12px;
  }
  .win {
    display: flex;
    align-items: center;
    justify-content: center;
    width: 45px;
    height: 29px;
  }
  .close {
    align-self: flex-start;
    background: #f5a1a8;
  }
  .content {
    display: flex;
    flex-direction: column;
    padding: 12px 13px 14px 11px;
  }
  .inputs {
    display: flex;
    gap: 7px;
    height: 21px;
    margin-left: 1px;
  }
  .plain {
    width: 73px;
    border: 1px solid #adadad;
    background: #e1e1e1;
  }
  .primary {
    width: 53px;
    border-color: #0078d7;
    background: #e5f1fb;
  }
  .inputs input {
    height: 20px;
    padding: 0 2px;
    border: 1px solid #7a7a7a;
    background: #fff;
  }
  .inputs .script {
    width: 144px;
  }
  .inputs .target {
    flex: 1;
    min-width: 0;
  }
  .tree {
    min-height: 220px;
    margin-top: 8px;
    padding: 1px 9px;
    border: 1px solid #828790;
    background: #fff;
  }
  .tree li,
  .tree label {
    display: flex;
    height: 16px;
  }
  label {
    display: flex;
    align-items: center;
    gap: 2px;
  }
  input[type='checkbox'] {
    display: grid;
    place-items: center;
    width: 13px;
    height: 13px;
    border: 1px solid #333;
    background: #fff;
    appearance: none;
  }
  input[type='checkbox']:checked::before {
    content: '';
    width: 9px;
    height: 8px;
    background: #444;
    clip-path: polygon(0 50%, 12% 38%, 35% 68%, 90% 5%, 100% 16%, 36% 94%);
  }
  .bottom {
    display: flex;
    gap: 5px;
    margin-top: 6px;
    margin-left: -1px;
  }
  textarea {
    width: 301px;
    height: 43px;
    border: 1px solid #828790;
    background: #fff;
    resize: none;
  }
  .options {
    display: flex;
    flex-direction: column;
    gap: 10px;
  }
  .options label {
    gap: 6px;
  }
</style>
